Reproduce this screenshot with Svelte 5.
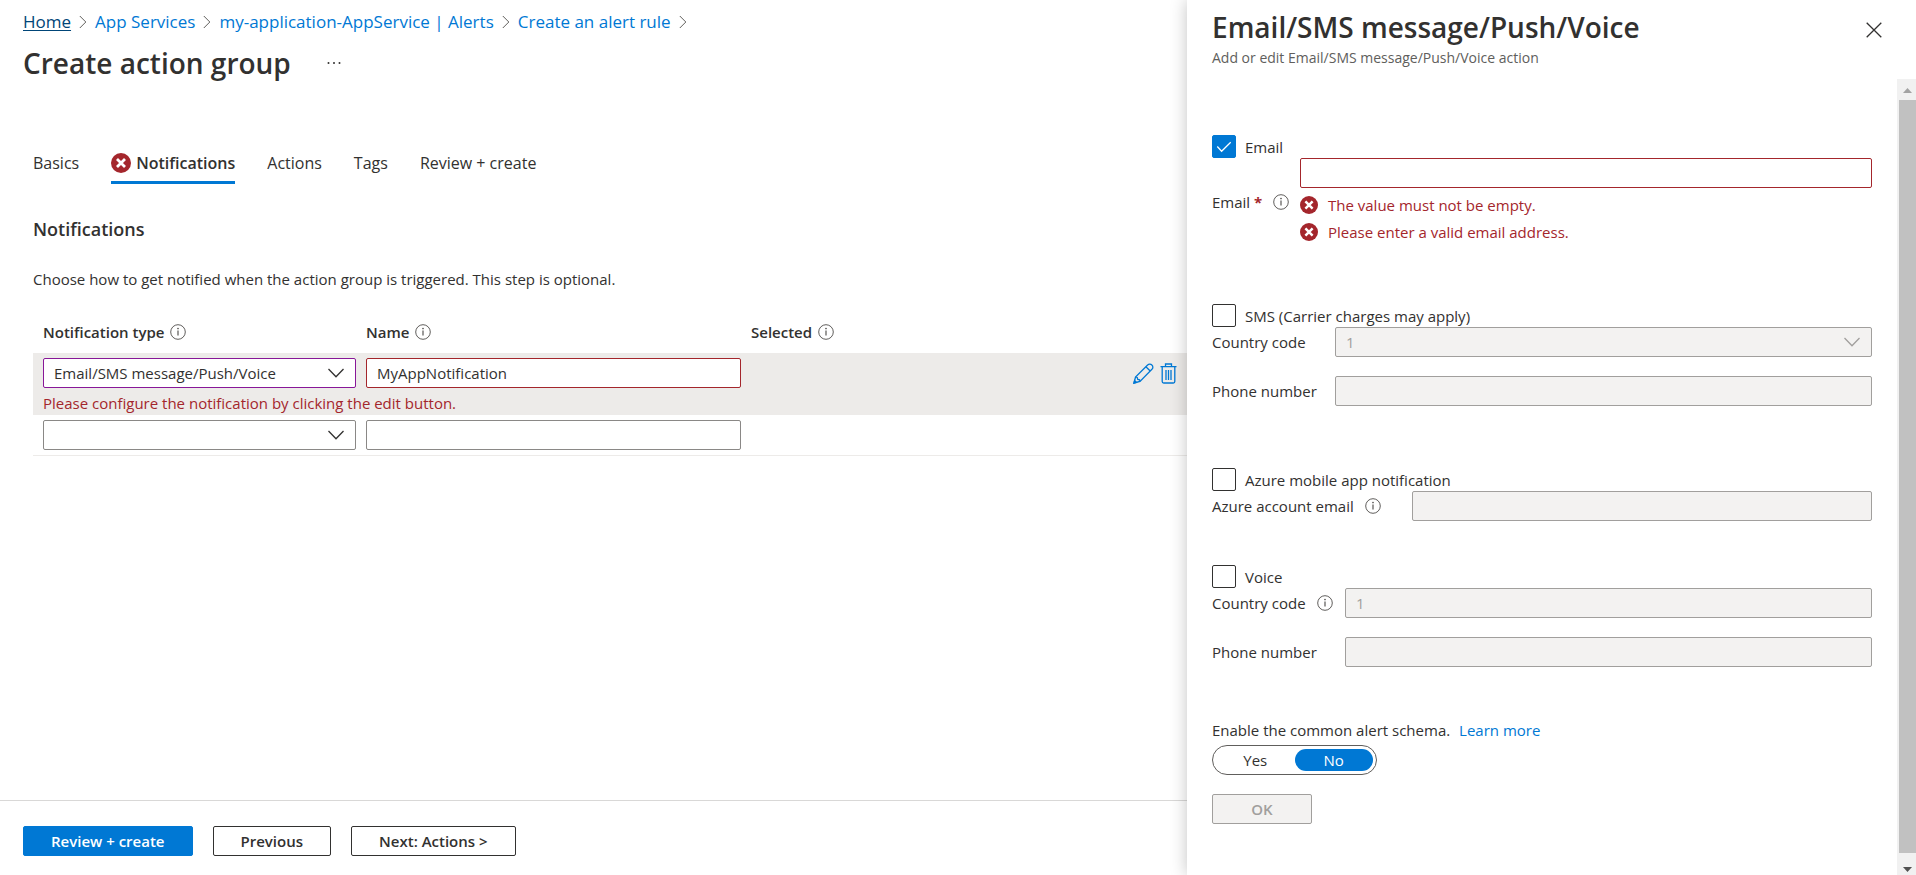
<script>
  const crumbs = ['Home', 'App Services', 'my-application-AppService | Alerts', 'Create an alert rule'];
  const tabs = ['Basics', 'Notifications', 'Actions', 'Tags', 'Review + create'];
  let active = $state('Notifications');
  let emailOn = $state(true);
  let schema = $state('No');
</script>

{#snippet info()}
  <svg class="info" viewBox="0 0 16 16" role="img" aria-label="More information">
    <circle cx="8" cy="8" r="7.3" fill="none" stroke="#605e5c" />
    <path d="M8 6.6v5" stroke="#484644" stroke-width="1.1" />
    <circle cx="8" cy="4.6" r=".8" fill="#484644" />
  </svg>
{/snippet}

{#snippet fail()}
  <svg class="fail" viewBox="0 0 18 18" aria-hidden="true">
    <circle cx="9" cy="9" r="9" fill="#a4262c" />
    <path d="M5.400 5.400l7.200 7.200M12.600 5.400l-7.200 7.200" stroke="#fff" stroke-width="2.500" />
  </svg>
{/snippet}

{#snippet chevron()}
  <svg class="chevron" viewBox="0 0 16 10" aria-hidden="true">
    <path d="M.5 1L8 8.8 15.500 1" fill="none" stroke="currentColor" stroke-width="1.3" />
  </svg>
{/snippet}

<div class="page">
  <main>
    <nav class="crumbs" aria-label="Breadcrumb">
      {#each crumbs as crumb, i}
        <a href="#top" class:home={i === 0}>{crumb}</a>
        <svg viewBox="0 0 8 14" aria-hidden="true"><path d="M.8 1l6 6-6 6" fill="none" stroke="#605e5c" /></svg>
      {/each}
    </nav>

    <header class="title">
      <h1>Create action group</h1>
      <button aria-label="More actions">
        <svg viewBox="0 0 16 4" aria-hidden="true">
          <circle cx="2.500" cy="2" r="1" /><circle cx="8" cy="2" r="1" /><circle cx="13.500" cy="2" r="1" />
        </svg>
      </button>
    </header>

    <div class="tabs" role="tablist">
      {#each tabs as tab}
        <button role="tab" aria-selected={active === tab} class:active={active === tab} onclick={() => (active = tab)}>
          {#if tab === 'Notifications'}{@render fail()}{/if}
          {tab}
        </button>
      {/each}
    </div>

    <section class="content">
      <h2>Notifications</h2>
      <p>Choose how to get notified when the action group is triggered. This step is optional.</p>
      <table>
        <colgroup><col class="c-type" /><col class="c-name" /><col /><col class="c-tools" /></colgroup>
        <thead>
          <tr>
            <th><span>Notification type {@render info()}</span></th>
            <th><span>Name {@render info()}</span></th>
            <th><span>Selected {@render info()}</span></th>
            <td></td>
          </tr>
        </thead>
        <tbody>
          <tr class="current">
            <td>
              <div class="pick edited">
                <select aria-label="Notification type"><option>Email/SMS message/Push/Voice</option></select>
                {@render chevron()}
              </div>
            </td>
            <td><input class="field invalid" aria-label="Name" value="MyAppNotification" /></td>
            <td></td>
            <td>
              <div class="tools">
                <button aria-label="Edit">
                  <svg viewBox="0 0 21 21" fill="none" stroke="#0078d4" stroke-width="1.3" aria-hidden="true">
                    <path d="M1 20l1.500-6L14.600 2a2.900 2.900 0 0 1 4.300 0 2.900 2.900 0 0 1 0 4.300L7 18.400z" />
                    <path d="M12.900 3.700l4.300 4.300M2.500 14l1.700.500.600 2 1.800.400.400 1.500" />
                    <path d="M1 20l.6-2.400 1.800 1.800z" fill="#0078d4" />
                  </svg>
                </button>
                <button aria-label="Delete">
                  <svg viewBox="0 0 17 21" fill="none" stroke="#0078d4" stroke-width="1.3" aria-hidden="true">
                    <path d="M.5 3.700h16M5.500 3.500V1h6v2.500M2.200 4v14.500q0 1.500 1.500 1.500h9.600q1.500 0 1.500-1.500V4M6 7v10M8.500 7v10M11 7v10" />
                  </svg>
                </button>
              </div>
            </td>
          </tr>
          <tr class="current message">
            <td colspan="4">Please configure the notification by clicking the edit button.</td>
          </tr>
          <tr class="blank">
            <td>
              <div class="pick">
                <select aria-label="New notification type"><option></option></select>
                {@render chevron()}
              </div>
            </td>
            <td><input class="field" aria-label="New name" /></td>
            <td></td>
            <td></td>
          </tr>
        </tbody>
      </table>
    </section>

    <footer>
      <button class="btn primary">Review + create</button>
      <button class="btn">Previous</button>
      <button class="btn">Next: Actions &gt;</button>
    </footer>
  </main>

  <aside>
    <header class="panel-head">
      <div>
        <h2>Email/SMS message/Push/Voice</h2>
        <p>Add or edit Email/SMS message/Push/Voice action</p>
      </div>
      <button aria-label="Close">
        <svg viewBox="0 0 16 16" aria-hidden="true"><path d="M.7.700l14.600 14.600M15.300.700L.7 15.300" stroke="#323130" stroke-width="1.3" /></svg>
      </button>
    </header>

    <div class="scroller">
      <form onsubmit={(e) => e.preventDefault()}>
        <fieldset class="g-email">
          <label class="check">
            <span class="box">
              <input type="checkbox" bind:checked={emailOn} />
              <svg viewBox="0 0 24 24" aria-hidden="true"><path d="M5 12l4.500 5L19 7.500" fill="none" stroke="#fff" stroke-width="1.3" /></svg>
            </span>
            Email
          </label>
          <div class="line">
            <div class="caption"><label for="email">Email <b>*</b></label>{@render info()}</div>
            <div>
              <input id="email" class="field invalid" />
              <ul>
                <li>{@render fail()}The value must not be empty.</li>
                <li>{@render fail()}Please enter a valid email address.</li>
              </ul>
            </div>
          </div>
        </fieldset>

        <fieldset class="g-sms">
          <label class="check"><span class="box"><input type="checkbox" /></span>SMS (Carrier charges may apply)</label>
          <div class="line">
            <div class="caption"><label for="sms-code">Country code</label></div>
            <div class="pick off">
              <select id="sms-code" disabled><option>1</option></select>
              {@render chevron()}
            </div>
          </div>
          <div class="line">
            <div class="caption"><label for="sms-phone">Phone number</label></div>
            <input id="sms-phone" class="field" disabled />
          </div>
        </fieldset>

        <fieldset class="g-push">
          <label class="check"><span class="box"><input type="checkbox" /></span>Azure mobile app notification</label>
          <div class="line">
            <div class="caption"><label for="account">Azure account email</label>{@render info()}</div>
            <input id="account" class="field" disabled />
          </div>
        </fieldset>

        <fieldset class="g-voice">
          <label class="check"><span class="box"><input type="checkbox" /></span>Voice</label>
          <div class="line">
            <div class="caption"><label for="voice-code">Country code</label>{@render info()}</div>
            <input id="voice-code" class="field" value="1" disabled />
          </div>
          <div class="line">
            <div class="caption"><label for="voice-phone">Phone number</label></div>
            <input id="voice-phone" class="field" disabled />
          </div>
        </fieldset>

        <p class="schema">Enable the common alert schema. <a href="#learn">Learn more</a></p>
        <div class="toggle" role="group" aria-label="Common alert schema">
          {#each ['Yes', 'No'] as choice}
            <button type="button" aria-pressed={schema === choice} class:on={schema === choice} onclick={() => (schema = choice)}>{choice}</button>
          {/each}
        </div>
        <button class="btn ok" disabled>OK</button>
      </form>
      <div class="bar" aria-hidden="true">
        <svg viewBox="0 0 9 5"><path d="M0 5L4.500 0 9 5z" fill="#a3a3a3" /></svg>
        <div class="thumb"></div>
        <svg viewBox="0 0 9 5"><path d="M0 0l4.500 5L9 0z" fill="#505050" /></svg>
      </div>
    </div>
  </aside>
</div>

<style>
  :global(body) { margin: 0; background: #fff; }
  .page {
    display: grid;
    grid-template-columns: minmax(0, 1fr) 729px;
    min-height: 100vh;
    font: 15px/24px "Open Sans", "Noto Sans", sans-serif;
    color: #323130;
  }
  .page * { box-sizing: border-box; }
  button, input, select { font: inherit; color: inherit; margin: 0; }
  button { border: 0; background: none; padding: 0; cursor: pointer; }
  h1, h2, p, ul { margin: 0; padding: 0; }
  h1, h2, th, .btn { font-weight: 600; }
  a { color: #0078d4; text-decoration: none; }
  svg { display: block; flex: none; }
  .info { width: 16px; height: 16px; }
  .fail { width: 18px; height: 18px; }

  main { display: flex; flex-direction: column; }
  .crumbs { display: flex; align-items: center; gap: 8px; height: 44px; padding-left: 23px; font-size: 17px; }
  .crumbs svg { width: 8px; height: 14px; }
  .crumbs .home { color: #004578; text-decoration: underline; text-underline-offset: 2px; }
  .title { display: flex; align-items: center; gap: 35px; height: 38px; padding-left: 23px; }
  h1 { font-size: 28px; line-height: 38px; }
  .title svg { width: 16px; height: 4px; fill: #323130; }

  .tabs { display: flex; gap: 32px; margin: 66px 0 0 33px; font-size: 16px; }
  .tabs button { display: flex; align-items: center; gap: 5px; height: 36px; padding-bottom: 3px; border-bottom: 3px solid transparent; }
  .tabs .active { font-weight: 600; border-color: #0078d4; }
  .tabs .fail { width: 20px; height: 20px; }

  .content { flex: 1; padding-left: 33px; }
  .content h2 { margin-top: 31px; font-size: 18px; line-height: 28px; }
  .content p { margin-top: 24px; }
  table { width: 100%; margin-top: 19px; border-collapse: collapse; table-layout: fixed; }
  .c-type { width: 323px; }
  .c-name { width: 385px; }
  .c-tools { width: 80px; }
  th, td { padding: 0 0 0 10px; text-align: left; }
  thead tr { height: 43px; }
  th span { display: flex; align-items: center; gap: 6px; }
  .current { background: #edebe9; }
  .current td { padding-top: 5px; }
  .current.message td { height: 27px; padding-top: 3px; color: #a4262c; }
  .blank td { padding-top: 5px; padding-bottom: 5px; border-bottom: 1px solid #edebe9; }
  .tools { display: flex; justify-content: flex-end; gap: 6px; padding-right: 10px; }
  .tools svg { height: 21px; }

  .field, .pick { display: block; width: 100%; height: 30px; border: 1px solid #8a8886; border-radius: 2px; background: #fff; }
  .field { padding: 0 10px; }
  .invalid { border-color: #a4262c; }
  .pick { display: grid; align-items: center; }
  .pick > :global(*) { grid-area: 1 / 1; }
  .pick select { width: 100%; height: 28px; padding: 0 10px; border: 0; background: none; appearance: none; opacity: 1; }
  .pick .chevron { justify-self: end; margin-right: 11px; width: 16px; height: 10px; pointer-events: none; }
  .edited { border-color: #881798; }
  .off, .field:disabled { background: #f3f2f1; border-color: #a19f9d; color: #a19f9d; }

  footer { display: flex; align-items: flex-start; gap: 20px; height: 75px; padding: 25px 23px 0; border-top: 1px solid #d9d8d7; }
  .btn { height: 30px; padding: 0 27px; border: 1px solid #323130; border-radius: 2px; }
  .primary { background: #0078d4; border-color: #0078d4; color: #fff; }

  aside { display: flex; flex-direction: column; background: #fff; box-shadow: 0 0 16px rgba(0, 0, 0, 0.24); }
  .panel-head { display: flex; justify-content: space-between; align-items: flex-start; height: 79px; padding: 8px 34px 0 25px; }
  .panel-head h2 { font-size: 28px; line-height: 38px; }
  .panel-head p { font-size: 14px; line-height: 24px; color: #605e5c; }
  .panel-head button { margin-top: 14px; }
  .panel-head svg { width: 16px; height: 16px; }
  .scroller { flex: 1; display: flex; }
  form { flex: 1; padding: 56px 25px 0; }
  fieldset { margin: 0; padding: 0; border: 0; min-width: 0; }
  .g-email { --caption: 88px; margin-bottom: 59px; }
  .g-sms { --caption: 123px; margin-bottom: 62px; }
  .g-push { --caption: 200px; margin-bottom: 44px; }
  .g-voice { --caption: 133px; margin-bottom: 51px; }
  .check { display: flex; align-items: center; gap: 9px; height: 23px; width: max-content; }
  .box { display: grid; }
  .box > * { grid-area: 1 / 1; }
  .box input { appearance: none; width: 24px; height: 23px; border: 1px solid #323130; border-radius: 2px; background: #fff; }
  .box input:checked { background: #0078d4; border-color: #0078d4; }
  .box svg { width: 24px; height: 23px; pointer-events: none; }
  .line { display: grid; grid-template-columns: var(--caption) 1fr; align-items: center; }
  .line + .line { margin-top: 19px; }
  .caption { display: flex; align-items: center; gap: 11px; white-space: nowrap; }
  .caption b { color: #a4262c; }
  ul { list-style: none; padding-top: 3px; color: #a4262c; }
  li { display: flex; align-items: center; gap: 10px; height: 27px; }
  .schema a { margin-left: 5px; }
  .toggle { display: flex; width: 165px; height: 30px; margin-top: 3px; padding: 3px; border: 1px solid #605e5c; border-radius: 15px; }
  .toggle button { flex: 1; border-radius: 11px; line-height: 22px; }
  .toggle .on { background: #0078d4; color: #fff; }
  .ok { display: block; width: 100px; margin-top: 19px; padding: 0; background: #f3f2f1; border-color: #a19f9d; color: #a19f9d; }

  .bar { display: flex; flex-direction: column; align-items: center; width: 19px; padding: 9px 0 3px 2px; background: #f1f1f1; }
  .bar svg { width: 9px; height: 5px; }
  .thumb { flex: 1; width: 17px; margin: 7px 0 14px; background: #c1c1c1; }
</style>
